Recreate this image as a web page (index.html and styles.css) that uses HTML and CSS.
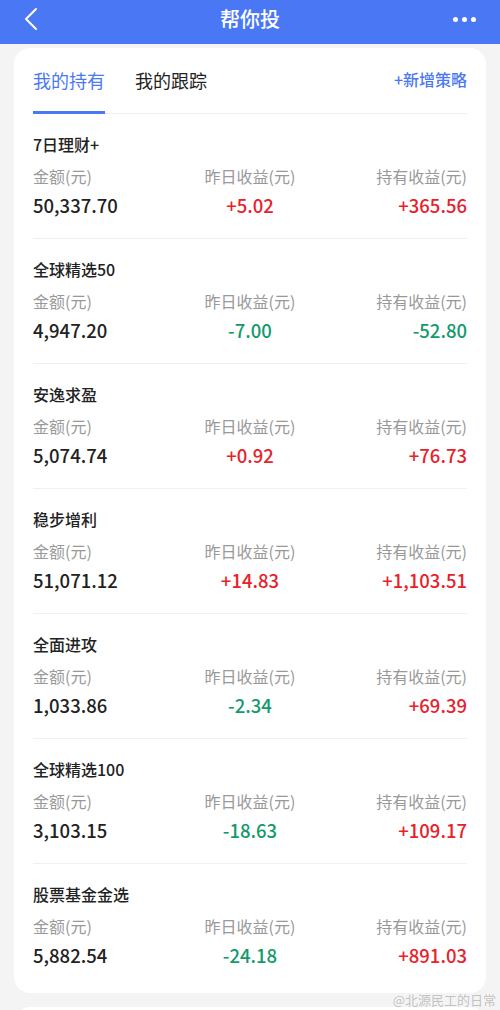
FILE: index.html
```html
<!DOCTYPE html>
<html>
  <head>
    <meta charset="UTF-8" />
    <meta name="viewport" content="width=device-width, initial-scale=1.0" />
    <title>帮你投</title>
    <link rel="stylesheet" href="styles.css">
  </head>
  <body>
    <div class="header">
      <svg class="back" width="16" height="24" viewBox="0 0 16 24">
        <path d="M13 2 L3 12 L13 22" fill="none" stroke="#fff" stroke-width="2" stroke-linecap="round" stroke-linejoin="round" />
      </svg>
      <div class="title">帮你投</div>
      <div class="more"><span></span><span></span><span></span></div>
    </div>

    <div class="card">
      <div class="tabs">
        <div class="tab active">我的持有</div>
        <div class="tab">我的跟踪</div>
        <div class="add">+新增策略</div>
      </div>

      <div id="list"></div>
    </div>

    <div class="card next"></div>

    <div class="mark">@北源民工的日常</div>

    <script>
      // holdings: name, amount, yesterday, total
      var items = [
        ["7日理财+", "50,337.70", "+5.02", "+365.56"],
        ["全球精选50", "4,947.20", "-7.00", "-52.80"],
        ["安逸求盈", "5,074.74", "+0.92", "+76.73"],
        ["稳步增利", "51,071.12", "+14.83", "+1,103.51"],
        ["全面进攻", "1,033.86", "-2.34", "+69.39"],
        ["全球精选100", "3,103.15", "-18.63", "+109.17"],
        ["股票基金金选", "5,882.54", "-24.18", "+891.03"]
      ];

      function colorClass(v) {
        return v.charAt(0) === "-" ? "down" : "up";
      }

      var list = document.getElementById("list");
      for (var i = 0; i < items.length; i++) {
        var it = items[i];
        var row = document.createElement("div");
        row.className = "item";
        row.innerHTML =
          '<div class="name">' + it[0] + '</div>' +
          '<div class="grid">' +
          '<div class="label">金额(元)</div>' +
          '<div class="label mid">昨日收益(元)</div>' +
          '<div class="label right">持有收益(元)</div>' +
          '<div class="value">' + it[1] + '</div>' +
          '<div class="value mid ' + colorClass(it[2]) + '">' + it[2] + '</div>' +
          '<div class="value right ' + colorClass(it[3]) + '">' + it[3] + '</div>' +
          '</div>';
        list.appendChild(row);
      }
    </script>
  </body>
</html>
```

FILE: styles.css
```css
body {
  margin: 0;
  background-color: #f4f4f4;
  font-family: "Noto Sans CJK SC", "Noto Sans", sans-serif;
  color: #222;
  overflow: hidden;
  height: 1010px;
  position: relative;
}

.header {
  height: 44px;
  background-color: #4a78f5;
  display: flex;
  align-items: center;
  justify-content: space-between;
  padding: 0 24px 0 23px;
  color: #fff;
}

.back {
  display: block;
  margin-top: -6px;
}

.title {
  font-size: 20px;
  font-weight: 500;
  line-height: 24px;
  margin-top: -6px;
  padding-left: 8px;
}

.more {
  display: flex;
  gap: 4px;
  margin-top: -6px;
}

.more span {
  width: 5px;
  height: 5px;
  border-radius: 50%;
  background-color: #fff;
}

.card {
  background-color: #fff;
  margin: 4px 14px 0;
  border-radius: 16px;
  padding: 0 19px 5px;
}

.card.next {
  margin-top: 14px;
  height: 40px;
}

.tabs {
  display: flex;
  align-items: flex-end;
  border-bottom: 1px solid #f0f0f0;
  padding-top: 19px;
}

.tab {
  font-size: 18px;
  line-height: 24px;
  padding-bottom: 19px;
  border-bottom: 3px solid transparent;
  margin-right: 30px;
  margin-bottom: -1px;
}

.tab.active {
  color: #4a78f5;
  border-bottom-color: #4a78f5;
}

.add {
  margin-left: auto;
  font-size: 16px;
  line-height: 24px;
  font-weight: 500;
  color: #4a78f5;
  padding-bottom: 22px;
}

.item {
  padding: 20px 0 21px;
  border-bottom: 1px solid #f0f0f0;
}

.item:last-child {
  border-bottom: none;
}

.name {
  font-size: 16px;
  line-height: 20px;
  font-weight: 500;
}

.grid {
  display: grid;
  grid-template-columns: 1fr 1fr 1fr;
  row-gap: 7px;
  margin-top: 12px;
}

.label {
  font-size: 16px;
  line-height: 20px;
  color: #999;
}

.value {
  font-size: 18.5px;
  line-height: 24px;
  font-weight: 500;
  color: #222;
}

.mid {
  text-align: center;
}

.right {
  text-align: right;
}

.up {
  color: #e8212b;
}

.down {
  color: #139a6a;
}

.mark {
  position: absolute;
  right: 4px;
  top: 990px;
  font-size: 13px;
  color: rgba(150, 150, 150, 0.55);
}
```
